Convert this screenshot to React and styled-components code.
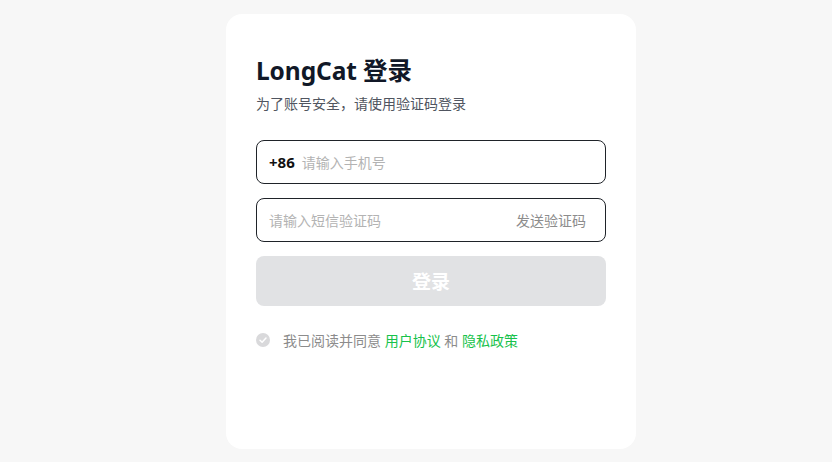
import React from "react";
import styled, { createGlobalStyle } from "styled-components";

const Global = createGlobalStyle`
  html, body { margin: 0; padding: 0; background: #f7f7f7; }
  body { font-family: "Noto Sans", "Noto Sans CJK SC", sans-serif; }
  * { box-sizing: border-box; }
`;

const Page = styled.div`
  width: 832px;
  height: 462px;
  display: flex;
  justify-content: center;
  padding: 14px 0 0 30px;
`;

const Card = styled.div`
  width: 410px;
  height: 435px;
  background: #fff;
  border-radius: 16px;
  padding: 41px 30px 0;
  display: flex;
  flex-direction: column;
`;

const Title = styled.h1`
  margin: 0;
  font-size: 24.5px;
  line-height: 32px;
  font-weight: 700;
  color: #111827;
  letter-spacing: -0.1px;
`;

const Subtitle = styled.p`
  margin: 7px 0 0;
  font-size: 14px;
  line-height: 20px;
  color: #505560;
`;

const Field = styled.div`
  height: 44px;
  border: 1px solid #1f2329;
  border-radius: 8px;
  display: flex;
  align-items: center;
  padding: 0 19px 0 12px;
  margin-top: ${(p) => p.$mt}px;
  gap: 7px;
`;

const Prefix = styled.span`
  font-size: 15px;
  font-weight: 700;
  color: #111;
`;

const Placeholder = styled.span`
  flex: 1;
  font-size: 14px;
  color: #b3b3b3;
`;

const SendCode = styled.span`
  font-size: 14px;
  color: #8c8c8c;
`;

const LoginButton = styled.div`
  margin-top: 14px;
  height: 50px;
  border-radius: 8px;
  background: #e1e2e4;
  color: #fff;
  font-size: 19px;
  font-weight: 700;
  display: flex;
  align-items: center;
  justify-content: center;
`;

const Agree = styled.div`
  margin-top: 24px;
  display: flex;
  align-items: center;
  font-size: 14px;
  color: #8c8c8c;
  gap: 13px;
`;

const Link = styled.span`
  color: #17c24b;
`;

const Check = () => (
  <svg width="14" height="14" viewBox="0 0 14 14">
    <circle cx="7" cy="7" r="7" fill="#d9d9db" />
    <path d="M4 7.2 L6.1 9.2 L10 5.1" stroke="#fff" strokeWidth="1.5" fill="none" strokeLinecap="round" strokeLinejoin="round" />
  </svg>
);

export default function App() {
  return (
    <Page>
      <Global />
      <Card>
        <Title>LongCat 登录</Title>
        <Subtitle>为了账号安全，请使用验证码登录</Subtitle>
        <Field $mt={26}>
          <Prefix>+86</Prefix>
          <Placeholder>请输入手机号</Placeholder>
        </Field>
        <Field $mt={14}>
          <Placeholder>请输入短信验证码</Placeholder>
          <SendCode>发送验证码</SendCode>
        </Field>
        <LoginButton>登录</LoginButton>
        <Agree>
          <Check />
          <span>
            我已阅读并同意 <Link>用户协议</Link> 和 <Link>隐私政策</Link>
          </span>
        </Agree>
      </Card>
    </Page>
  );
}
